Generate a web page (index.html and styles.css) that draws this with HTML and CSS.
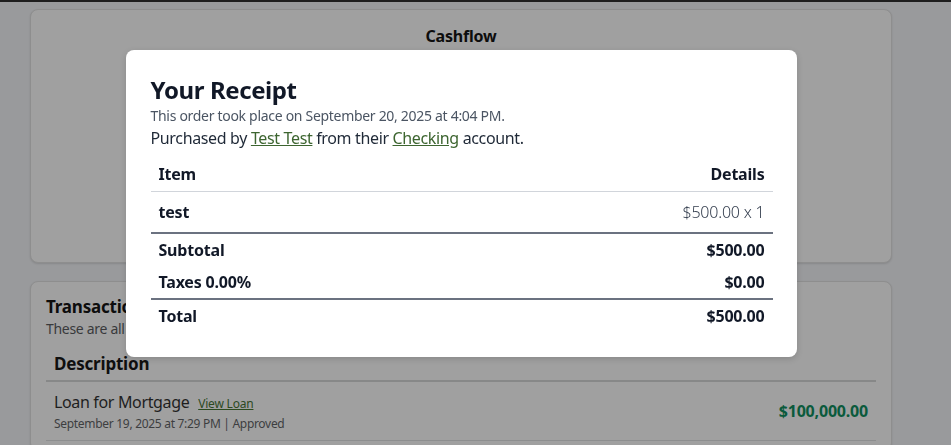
FILE: index.html
```html
<!DOCTYPE html>
<html>
<head>
<meta charset="utf-8">
<link rel="stylesheet" href="styles.css">
</head>
<body>
<div class="topbar"></div>
<div class="page">
  <section class="card card-cashflow">
    <h2 class="card-title center">Cashflow</h2>
  </section>
  <section class="card card-tx">
    <h2 class="card-title">Transactions</h2>
    <p class="card-sub">These are all of your recent transactions.</p>
    <div class="tx-table">
      <div class="tx-head">Description</div>
      <div class="tx-row">
        <div class="tx-desc">
          <div class="tx-name">Loan for Mortgage <a class="tx-link" href="#">View Loan</a></div>
          <div class="tx-meta">September 19, 2025 at 7:29 PM | Approved</div>
        </div>
        <div class="tx-amount">$100,000.00</div>
      </div>
    </div>
  </section>
</div>

<div class="overlay">
  <div class="modal">
    <h1 class="modal-title">Your Receipt</h1>
    <p class="modal-sub">This order took place on September 20, 2025 at 4:04 PM.</p>
    <p class="modal-by">Purchased by <a href="#" class="link">Test Test</a> from their <a href="#" class="link">Checking</a> account.</p>
    <div class="receipt">
      <div class="r-row r-head"><span>Item</span><span>Details</span></div>
      <div class="r-row r-item"><span class="b">test</span><span class="light">$500.00 x 1</span></div>
      <div class="r-row r-sum"><span>Subtotal</span><span>$500.00</span></div>
      <div class="r-row r-sum r-tax"><span>Taxes 0.00%</span><span>$0.00</span></div>
      <div class="r-row r-sum"><span>Total</span><span>$500.00</span></div>
    </div>
  </div>
</div>
</body>
</html>
```

FILE: styles.css
```css
* { box-sizing: border-box; }
html, body { margin: 0; padding: 0; }
body {
  background: #999a9c;
  font-family: "Noto Sans", "DejaVu Sans", sans-serif;
  color: #111;
  height: 445px;
  overflow: hidden;
}
.topbar { height: 2px; background: #1e1e1e; }
.page { width: 862px; margin-left: 30px; padding-top: 7px; }
.card {
  background: #a0a0a0;
  border: 1px solid #8e8e8e;
  border-radius: 8px;
  box-shadow: 0 1px 2px rgba(0,0,0,0.12);
}
.card-cashflow { height: 254px; padding: 14px 16px; }
.card-tx { margin-top: 18px; padding: 13px 15px 16px; height: 170px; }
.card-title { margin: 0; font-size: 16px; line-height: 24px; font-weight: 700; color: #0d0d0d; letter-spacing: -0.2px; }
.card-tx .card-title { font-size: 17px; }
.center { text-align: center; }
.card-sub { margin: 0; font-size: 14px; line-height: 20px; color: #393a3c; letter-spacing: -0.3px; }
.tx-table { margin-top: 9px; }
.tx-head {
  padding: 4px 8px;
  font-size: 17px; line-height: 24px; font-weight: 700; color: #0f0f0f;
  letter-spacing: -0.2px;
  border-bottom: 2px solid #878888;
}
.tx-row {
  display: flex; align-items: center; justify-content: space-between;
  padding: 8px 8px;
  border-bottom: 1px solid #8d8e8f;
}
.tx-name { font-size: 16px; line-height: 24px; color: #1e1e1e; letter-spacing: -0.35px; }
.tx-link { font-size: 12px; color: #2c4a1f; margin-left: 5px; letter-spacing: -0.2px; }
.tx-meta { font-size: 12px; line-height: 16px; color: #3d3e40; letter-spacing: -0.3px; }
.tx-amount { font-size: 16px; font-weight: 700; color: #0b5a3c; letter-spacing: -0.2px; }

.overlay {
  position: fixed; inset: 0;
  display: flex; justify-content: center; align-items: flex-start;
  padding: 50px 29px 0 0;
}
.modal {
  width: 671px;
  background: #fff;
  border-radius: 8px;
  padding: 24px 24px 25px 25px;
  box-shadow: 0 2px 6px rgba(0,0,0,0.15);
}
.modal-title { margin: 0; font-size: 24px; line-height: 32px; font-weight: 700; color: #111827; letter-spacing: -0.4px; }
.modal-sub { margin: 0; font-size: 14px; line-height: 20px; color: #4b5563; letter-spacing: -0.3px; }
.modal-by { margin: 0; font-size: 16px; line-height: 24px; color: #1f2937; letter-spacing: -0.35px; }
.link { color: #3d6530; text-decoration: underline; }
.receipt { margin-top: 8px; }
.r-row {
  display: flex; justify-content: space-between;
  padding: 4px 8px;
  font-size: 16px; line-height: 24px; font-weight: 700; color: #111827;
  letter-spacing: -0.2px;
}
.r-head { padding-bottom: 5px; border-bottom: 1px solid #d1d5db; }
.r-item { padding: 8px 8px; border-bottom: 2px solid #6b7280; }
.r-tax { border-bottom: 2px solid #6b7280; }
.light { font-weight: 300; color: #374151; }
```
